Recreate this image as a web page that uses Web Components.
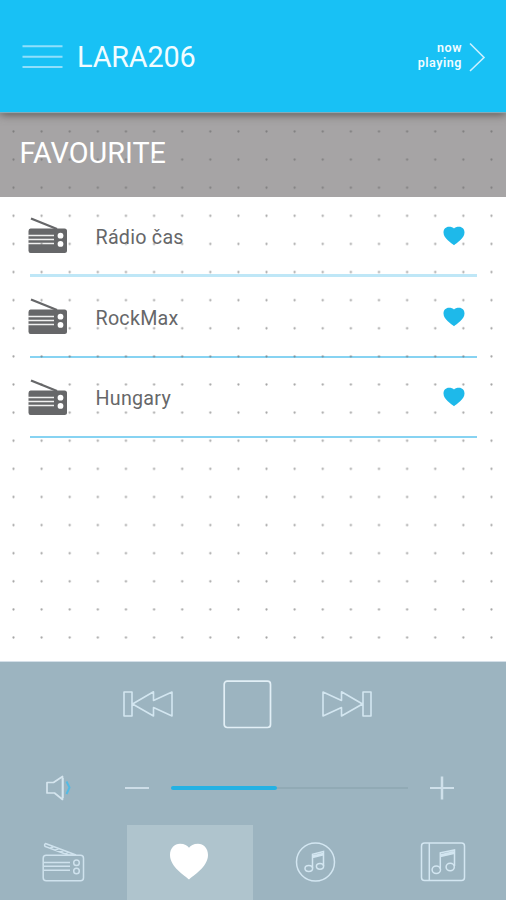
<!DOCTYPE html>
<html lang="en">
<head>
<meta charset="utf-8">
<title>LARA206</title>
<style>
html,body{margin:0;padding:0;background:#fff}
body{font-family:Roboto,"Noto Sans",sans-serif}
</style>
</head>
<body>
<lara-app></lara-app>
<script>
function define(name, html, setup) {
  const t = document.createElement('template');
  t.innerHTML = html;
  customElements.define(name, class extends HTMLElement {
    constructor() {
      super();
      this.attachShadow({ mode: 'open' }).append(t.content.cloneNode(true));
    }
    connectedCallback() { if (setup) setup(this, this.shadowRoot); }
  });
}

const ICONS = {
  menu: [42, 26, '<path d="M.5 2.2h40M.5 12.700h40M.5 23h40" stroke="#8fdffb" stroke-width="2" fill="none"/>'],
  chevron: [18, 30, '<path d="M2 1.5 16 15.5 2 29" stroke="#c9f0ff" stroke-width="1.6" fill="none"/>'],
  radio: [40, 38, '<path d="M3 1.5 29 12" stroke="#666769" stroke-width="2.3" fill="none"/><path fill="#666769" d="M2.5 11.500h34q2.500 0 2.500 2.500v19.500q0 2.500-2.500 2.500h-34Q.5 36 .5 33.500v-19.500Q.5 11.500 2.500 11.500z"/><path d="M0 18.500h26M0 22.500h26M0 26.500h26" stroke="#f1f1f1" stroke-width="1.500"/><circle cx="32.500" cy="18.700" r="2.900" fill="#fff"/><circle cx="32.500" cy="26.900" r="2.900" fill="#fff"/>'],
  heart: [22, 20, '<path fill="#1eb9ea" d="M11 19.200C8.500 17 .5 12.500.5 6.500.5 3 3 .8 5.800.8 8.200.8 10.200 1.300 11 2.400 11.800 1.300 13.800.8 16.200.8 19 .8 21.500 3 21.500 6.500 21.500 12.500 13.500 17 11 19.200z"/>'],
  prev: [52, 28, '<path d="M1 2h8v24H1zM9.500 14 30.500 1.800V10.500L49 2V26L30.500 17.500V26z" stroke-linejoin="round" fill="none" stroke="#d3e6f0" stroke-width="1.600"/>'],
  next: [52, 28, '<path d="M51 2h-8v24h8zM42.500 14 21.500 1.800V10.500L3 2V26L21.500 17.500V26z" stroke-linejoin="round" fill="none" stroke="#d3e6f0" stroke-width="1.600"/>'],
  stop: [49, 49, '<rect x="1.200" y="1.200" width="46.300" height="46.300" rx="3" fill="none" stroke="#e2eff6" stroke-width="1.700"/>'],
  speaker: [28, 26, '<path d="M2 7.500h6.500L17.500 1.500V24.500L9.500 18H2z" fill="none" stroke="#d5e5ee" stroke-width="1.700" stroke-linejoin="round"/><path d="M18.500 3v20" stroke="#c5dbe6"/><path d="M21.500 6.500 24.500 12.500 21.500 19" fill="none" stroke="#52bbe5" stroke-width="2"/>'],
  minus: [24, 24, '<path d="M0 12h24" stroke="#d3e2eb" stroke-width="1.800"/>'],
  plus: [24, 24, '<path d="M0 12h24" stroke="#d9e8f1" stroke-width="1.700"/><path d="M12 .5v23" stroke="#cfe0ea" stroke-width="2.500"/>'],
  radioLine: [43, 40, '<g fill="none" stroke="#cfe2ed" stroke-width="1.500"><rect x="1.200" y="13.200" width="40.300" height="25.500" rx="3"/><path d="M3.500 1.500 34 13H26L3 4.500Q2 2.500 3.500 1.500zM8 6.300l3.500-1.500M13 8.200l3.500-1.500M18 10l3.500-1.500M23 12l3.500-1.700" stroke-width="1.500"/><path d="M2 20.500h26M2 24.300h26M2 28.200h26"/><circle cx="34.500" cy="20.700" r="2.800"/><circle cx="34.500" cy="29" r="2.800"/></g>'],
  heartBig: [40, 37, '<path fill="#fff" d="M20 36.500C16 32.500 1 24 1 12 1 5 5.500.7 11 .7c4.500 0 7.500 1.800 9 4C21.500 2.500 24.500.7 29 .7c5.500 0 10 4.300 10 11.300C39 24 24 32.500 20 36.500z"/>'],
  disc: [41, 40, '<g fill="none" stroke="#d3e6f1" stroke-width="1.500"><circle cx="20.500" cy="20" r="19"/><path d="M17.500 26V12.300L28.500 9.500V24M17.500 15.500 28.500 12.800M18 14l10-2.500"/><ellipse cx="13.800" cy="26.500" rx="3.800" ry="2.900"/><ellipse cx="25" cy="24.300" rx="3.600" ry="2.900"/></g>'],
  album: [46, 40, '<g fill="none" stroke="#d3e6f1" stroke-width="1.500"><rect x="1.500" y="1" width="43" height="37.500" rx="3"/><path d="M9.300 1v37.500"/><path d="M20.300 27V10.800L34.500 8V24M20.300 14.500 34.500 11.300M21 12.800l13-3"/><ellipse cx="16.300" cy="27.800" rx="4.200" ry="3.800"/><ellipse cx="30.200" cy="25" rx="4.100" ry="3.700"/></g>']
};

define('ui-icon', '<style>:host{display:block;flex:none}svg{display:block}</style><div></div>', (el, root) => {
  const [w, h, body] = ICONS[el.getAttribute('name')];
  root.querySelector('div').innerHTML = `<svg width="${w}" height="${h}" viewBox="0 0 ${w} ${h}">${body}</svg>`;
});

define('app-header', `<style>
:host{display:flex;align-items:center;box-sizing:border-box;height:112px;padding:2px 20px 0 22px;background:#18c1f5;color:#f1fcff;position:relative;box-shadow:0 1px 1px #8ba9b4,0 2px 9px #524b48;clip-path:inset(0 0 -14px 0)}
h1{margin:0 0 0 13px;font-size:28.800px;line-height:34px;font-weight:400;white-space:nowrap;flex:1;letter-spacing:-.15px}
.now{text-align:right;font-size:12.500px;line-height:15px;font-weight:600;letter-spacing:.55px;margin-right:6px;padding-bottom:4px}
</style><ui-icon name="menu"></ui-icon><h1><slot></slot></h1><div class="now">now<br>playing</div><ui-icon name="chevron"></ui-icon>`);

define('section-title', `<style>
:host{display:flex;align-items:center;box-sizing:border-box;height:84.500px;padding:0 0 2px 19.500px;background:#a6a4a5;color:#fff;font-size:28.800px}
</style><slot></slot>`);

define('station-row', `<style>
:host{display:flex;align-items:center;box-sizing:border-box;height:80.600px;margin:0 29px 0 30px;padding:0 12px 0 0;border-bottom:2px solid #87d3f2;color:#666769;font-size:19.700px}
:host([soft]){border-bottom:3px solid #bfe7f7}
.radio{margin:2px 0 0 -2px}
.fav{margin-top:1px}
span{flex:1;margin-left:27.500px;padding-top:4px;letter-spacing:.25px}
</style><ui-icon class="radio" name="radio"></ui-icon><span><slot></slot></span><ui-icon class="fav" name="heart"></ui-icon>`);

define('dot-panel', `<style>
:host{display:grid;height:549px;overflow:hidden}
svg,.body{grid-area:1/1}
svg{z-index:1;pointer-events:none}
</style><div class="body"><slot></slot></div>
<svg width="506" height="549"><defs><pattern id="d" x="-.560" y="5.440" width="28.115" height="28.115" patternUnits="userSpaceOnUse"><circle cx="14.060" cy="14.060" r="1.100" fill="#666" fill-opacity=".6"/></pattern></defs><rect width="506" height="549" fill="url(#d)"/></svg>`);

define('transport-bar', `<style>
:host{display:flex;align-items:center;justify-content:center;height:84px;gap:48px;box-sizing:border-box;padding-right:11px}
</style><ui-icon name="prev"></ui-icon><ui-icon name="stop"></ui-icon><ui-icon name="next"></ui-icon>`);

define('volume-bar', `<style>
:host{display:flex;align-items:center;height:80px;box-sizing:border-box;padding:3px 52.500px 0 45px}
.minus{margin:0 22px 0 52px}
.track{flex:1;height:2px;background:#91aab5;display:flex;align-items:center;margin:1px 22px 0 0}
.fill{width:45%;height:4px;border-radius:2px;background:#24b1e3}
</style><ui-icon name="speaker"></ui-icon><ui-icon class="minus" name="minus"></ui-icon><div class="track"><div class="fill"></div></div><ui-icon name="plus"></ui-icon>`);

define('tab-item', `<style>
:host{display:flex;align-items:center;justify-content:center;height:75px;box-sizing:border-box;padding:0 0 2px 0}
:host([active]){background:#afc4cd}
</style><slot></slot>`);

define('player-dock', `<style>
:host{display:block;height:239px;box-sizing:border-box;border-top:1px solid #d4dfe8;background:#9cb4c0}
.tabs{display:grid;grid-template-columns:repeat(4,1fr);margin-top:-1px}
.tabs :nth-child(2),.tabs :nth-child(3){padding-right:1px}
</style><transport-bar></transport-bar><volume-bar></volume-bar>
<div class="tabs"><tab-item><ui-icon name="radioLine"></ui-icon></tab-item><tab-item active><ui-icon name="heartBig"></ui-icon></tab-item><tab-item><ui-icon name="disc"></ui-icon></tab-item><tab-item><ui-icon name="album"></ui-icon></tab-item></div>`);

define('lara-app', `<style>:host{display:flex;flex-direction:column;width:506px;height:900px;overflow:hidden}app-header{z-index:2}</style>
<app-header>LARA206</app-header>
<dot-panel><section-title>FAVOURITE</section-title><station-row soft>Rádio čas</station-row><station-row>RockMax</station-row><station-row>Hungary</station-row></dot-panel>
<player-dock></player-dock>`);
</script>
</body>
</html>
